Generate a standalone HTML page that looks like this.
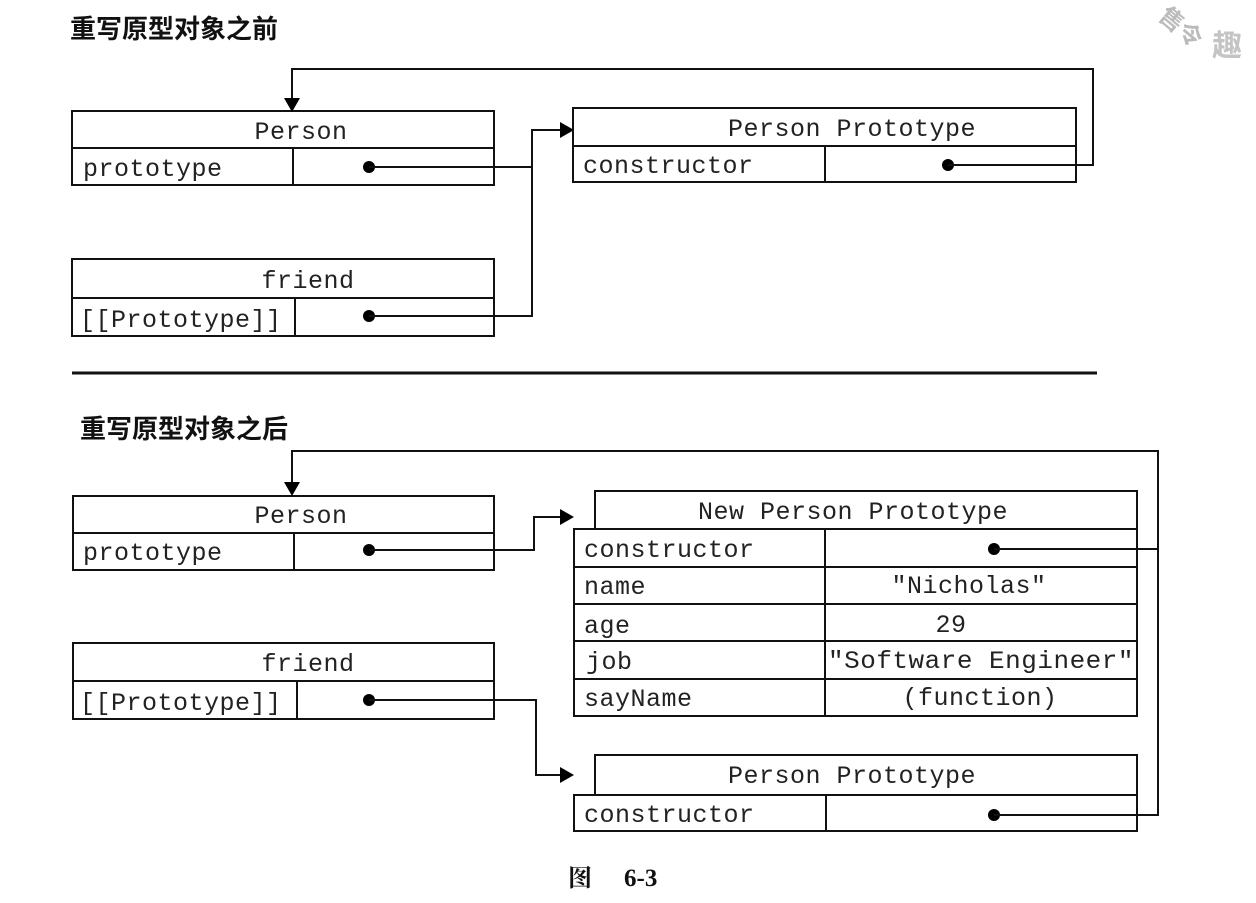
<!DOCTYPE html>
<html><head><meta charset="utf-8"><style>
html,body{margin:0;padding:0;background:#fff;}
svg{display:block}
.m{font-family:"Liberation Mono","DejaVu Sans Mono",monospace;font-size:25px;fill:#222;letter-spacing:0.5px}
.t{font-family:"Liberation Sans","Noto Sans CJK SC",sans-serif;font-size:26px;font-weight:bold;fill:#111}
rect,line,polyline{stroke:#111;stroke-width:2;fill:none}
</style></head><body>
<svg width="1256" height="903" viewBox="0 0 1256 903">
<text class="t" x="70" y="38">重写原型对象之前</text>
<rect x="72" y="111" width="422" height="74"/><line x1="72" y1="148" x2="494" y2="148"/><line x1="293" y1="148" x2="293" y2="185"/>
<text class="m" x="301" y="139" text-anchor="middle">Person</text>
<text class="m" x="83" y="176">prototype</text>
<circle cx="369" cy="167" r="6" fill="#000"/>
<polyline points="369,167 532,167"/>
<rect x="72" y="259" width="422" height="77"/><line x1="72" y1="298" x2="494" y2="298"/><line x1="295" y1="298" x2="295" y2="336"/>
<text class="m" x="308" y="288" text-anchor="middle">friend</text>
<text class="m" x="80" y="327">[[Prototype]]</text>
<circle cx="369" cy="316" r="6" fill="#000"/>
<polyline points="369,316 532,316 532,130 562,130"/>
<polygon points="560,122 574,130 560,138" fill="#000"/>
<rect x="573" y="108" width="503" height="74"/><line x1="573" y1="146" x2="1076" y2="146"/><line x1="825" y1="146" x2="825" y2="182"/>
<text class="m" x="852" y="136" text-anchor="middle">Person Prototype</text>
<text class="m" x="583" y="173">constructor</text>
<circle cx="948" cy="165" r="6" fill="#000"/>
<polyline points="948,165 1093,165 1093,69 292,69 292,100"/>
<polygon points="284,98 292,112 300,98" fill="#000"/>
<line x1="72" y1="373" x2="1097" y2="373" style="stroke-width:3"/>
<text class="t" x="80" y="438">重写原型对象之后</text>
<rect x="73" y="496" width="421" height="74"/><line x1="73" y1="533" x2="494" y2="533"/><line x1="294" y1="533" x2="294" y2="570"/>
<text class="m" x="301" y="523" text-anchor="middle">Person</text>
<text class="m" x="83" y="560">prototype</text>
<circle cx="369" cy="550" r="6" fill="#000"/>
<polyline points="369,550 534,550 534,517 562,517"/>
<polygon points="560,509 574,517 560,525" fill="#000"/>
<rect x="595" y="491" width="542" height="38"/>
<text class="m" x="853" y="519" text-anchor="middle">New Person Prototype</text>
<rect x="574" y="529" width="563" height="187"/>
<line x1="574" y1="567" x2="1137" y2="567"/><line x1="574" y1="604" x2="1137" y2="604"/><line x1="574" y1="641" x2="1137" y2="641"/><line x1="574" y1="679" x2="1137" y2="679"/>
<line x1="825" y1="529" x2="825" y2="716"/>
<text class="m" x="584" y="557">constructor</text>
<text class="m" x="584" y="594">name</text>
<text class="m" x="584" y="633">age</text>
<text class="m" x="586" y="669">job</text>
<text class="m" x="584" y="706">sayName</text>
<text class="m" x="969" y="593" text-anchor="middle">"Nicholas"</text>
<text class="m" x="951" y="632" text-anchor="middle">29</text>
<text class="m" x="981" y="668" text-anchor="middle" textLength="306" lengthAdjust="spacingAndGlyphs">"Software Engineer"</text>
<text class="m" x="980" y="705" text-anchor="middle">(function)</text>
<circle cx="994" cy="549" r="6" fill="#000"/>
<polyline points="994,549 1158,549 1158,451 292,451 292,484"/>
<polygon points="284,482 292,496 300,482" fill="#000"/>
<rect x="73" y="643" width="421" height="76"/><line x1="73" y1="681" x2="494" y2="681"/><line x1="297" y1="681" x2="297" y2="719"/>
<text class="m" x="308" y="671" text-anchor="middle">friend</text>
<text class="m" x="80" y="710">[[Prototype]]</text>
<circle cx="369" cy="700" r="6" fill="#000"/>
<polyline points="369,700 536,700 536,775 562,775"/>
<polygon points="560,767 574,775 560,783" fill="#000"/>
<rect x="595" y="755" width="542" height="40"/>
<text class="m" x="852" y="783" text-anchor="middle">Person Prototype</text>
<rect x="574" y="795" width="563" height="36"/><line x1="826" y1="795" x2="826" y2="831"/>
<text class="m" x="584" y="822">constructor</text>
<circle cx="994" cy="815" r="6" fill="#000"/>
<polyline points="994,815 1158,815 1158,549"/>
<text x="568" y="886" style="font-family:'Noto Serif CJK SC',serif;font-size:24px;font-weight:bold;fill:#111">图</text>
<text x="624" y="886" style="font-family:'Liberation Serif',serif;font-size:25px;font-weight:bold;fill:#111">6-3</text>
<text x="1160" y="30" transform="rotate(40 1175 20)" style="font-family:'Noto Sans CJK SC',sans-serif;font-size:24px;font-weight:bold;fill:#bbb">售令</text>
<text x="1212" y="56" style="font-family:'Noto Sans CJK SC',sans-serif;font-size:30px;font-weight:bold;fill:#c4c4c4">趣</text>
</svg>
</body></html>
